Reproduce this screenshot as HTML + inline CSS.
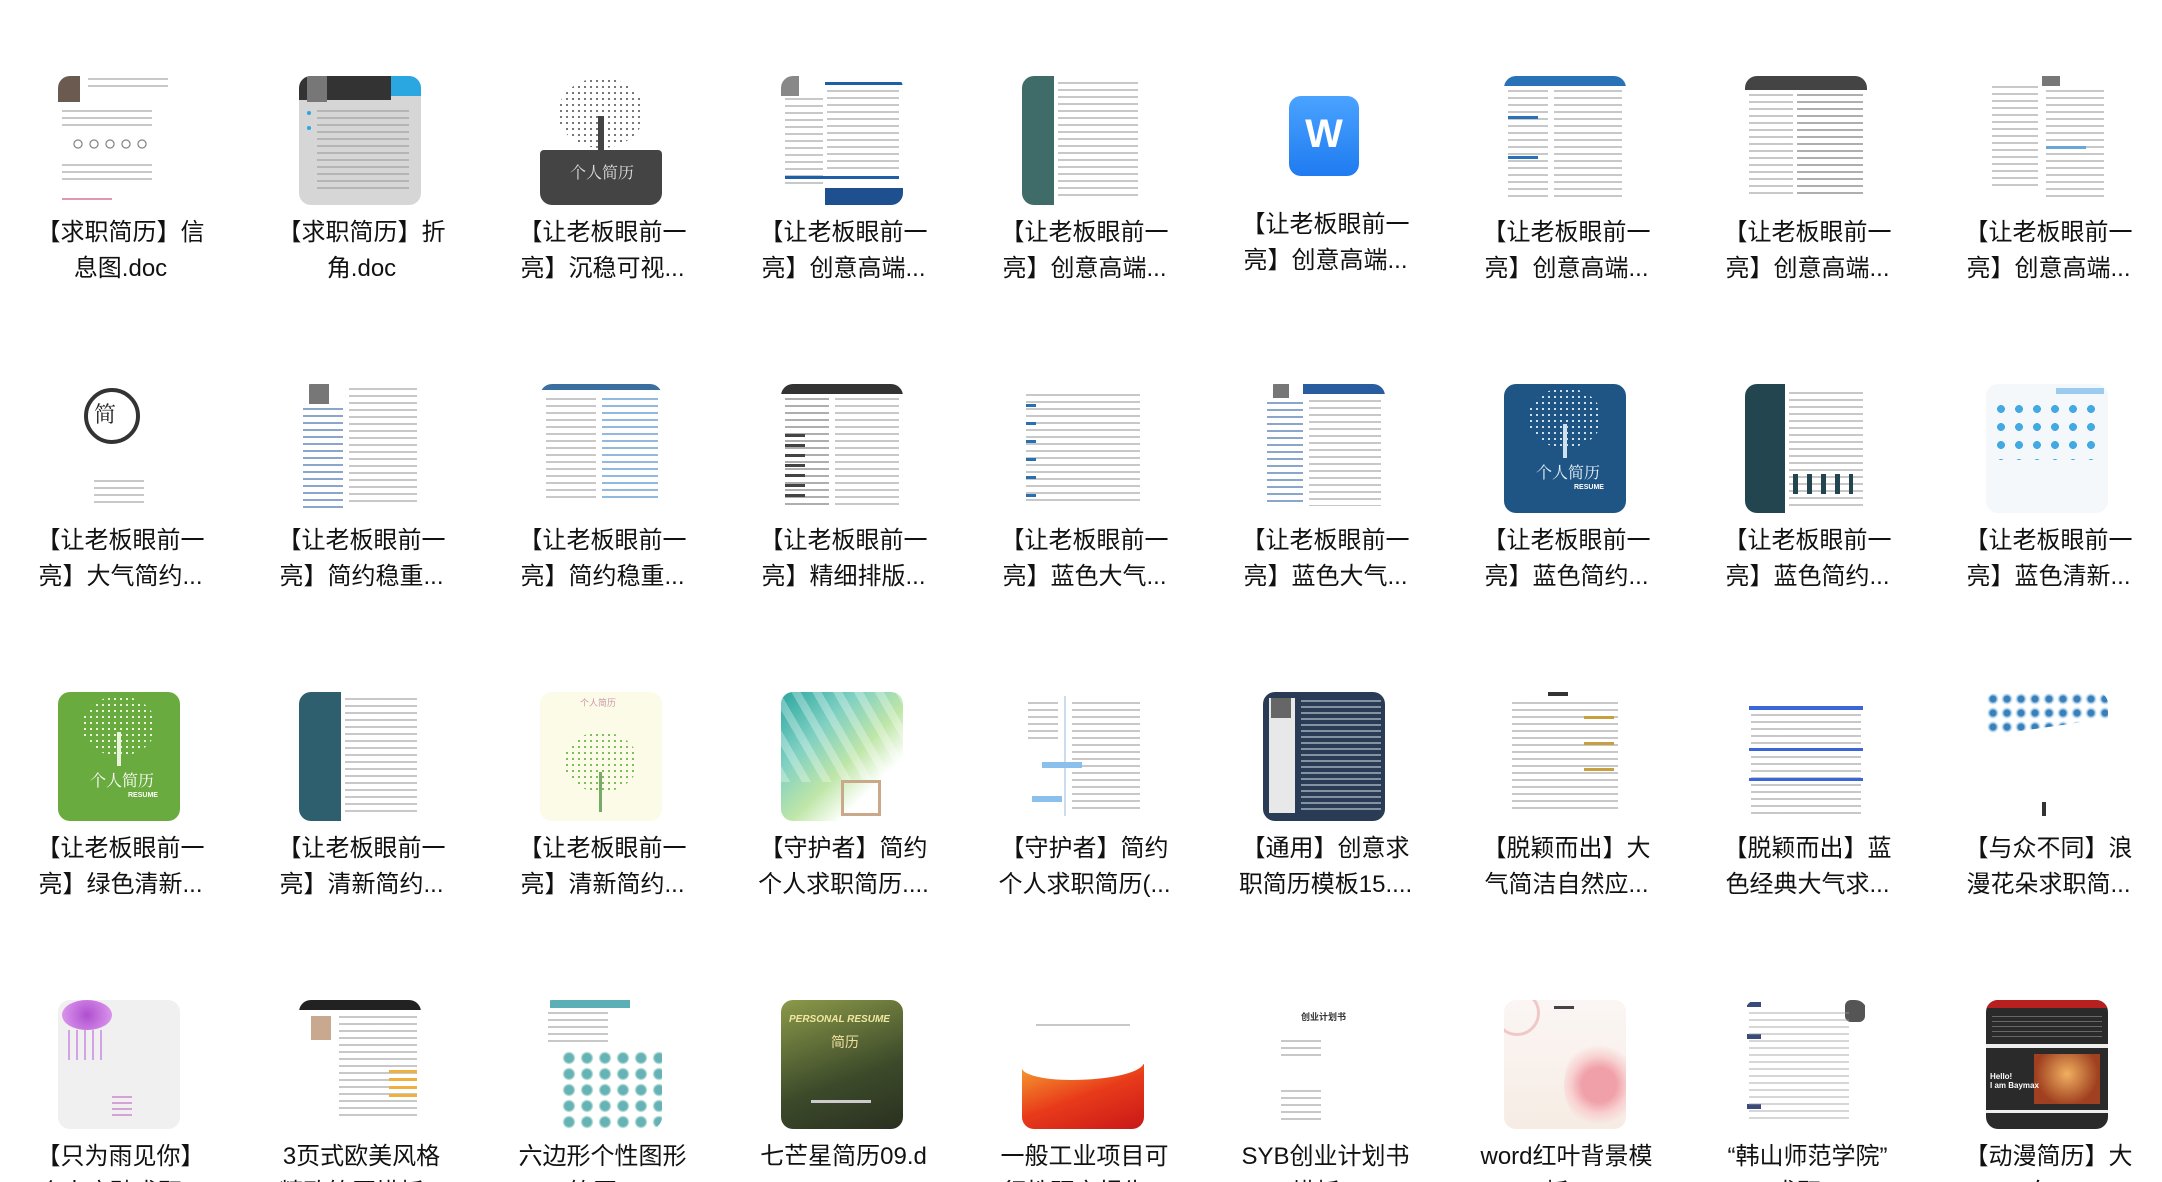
<!DOCTYPE html>
<html><head><meta charset="utf-8">
<style>
html,body{margin:0;padding:0;background:#fff;width:2162px;height:1182px;overflow:hidden;}
body{font-family:"Liberation Sans","Noto Sans CJK SC",sans-serif;position:relative;}
.item{position:absolute;width:241px;}
.th{position:absolute;left:58px;top:0;width:122px;height:129px;border-radius:12px;overflow:hidden;background:#fff;}
.lines{position:absolute;background:repeating-linear-gradient(to bottom,#9a9a9a 0 2px,transparent 2px 7px);opacity:.55}
.lbl{position:absolute;top:139px;left:0;width:241px;text-align:center;font-size:24px;line-height:36px;color:#111;white-space:nowrap;}
</style></head><body>

<!-- Row 1 -->
<div class="item" style="left:0;top:76px"><div class="th" style="background:#fff">
<div style="position:absolute;left:0;top:0;width:22px;height:26px;background:#6b5a50"></div>
<div class="lines" style="left:30px;top:2px;width:80px;height:14px"></div>
<div class="lines" style="left:4px;top:34px;width:90px;height:16px"></div>
<div style="position:absolute;left:12px;top:62px;width:80px;height:12px;background:radial-gradient(circle,#fff 3px,#666 4px,#fff 5px) 0 0/16px 12px repeat-x"></div>
<div class="lines" style="left:4px;top:88px;width:90px;height:20px"></div>
<div style="position:absolute;left:4px;top:122px;width:50px;height:2px;background:#e09ab0"></div>
</div><div class="lbl">【求职简历】信<br>息图.doc</div></div>

<div class="item" style="left:241px;top:76px"><div class="th" style="background:#d6d6d6">
<div style="position:absolute;left:0;top:0;width:92px;height:24px;background:#333"></div>
<div style="position:absolute;left:92px;top:0;width:30px;height:20px;background:#2aa7e0"></div>
<div style="position:absolute;left:8px;top:0;width:20px;height:26px;background:#777"></div>
<div class="lines" style="left:18px;top:34px;width:92px;height:80px"></div>
<div style="position:absolute;left:8px;top:35px;width:4px;height:4px;border-radius:50%;background:#2aa7e0"></div>
<div style="position:absolute;left:8px;top:50px;width:4px;height:4px;border-radius:50%;background:#2aa7e0"></div>
</div><div class="lbl">【求职简历】折<br>角.doc</div></div>

<div class="item" style="left:482px;top:76px"><div class="th" style="background:#fff">
<div style="position:absolute;left:18px;top:2px;width:86px;height:70px;border-radius:50%;background:radial-gradient(circle,#555 0 25%,transparent 26%) 0 0/6px 6px;opacity:.8"></div>
<div style="position:absolute;left:58px;top:40px;width:6px;height:36px;background:#444"></div>
<div style="position:absolute;left:0;top:74px;width:122px;height:55px;background:#444;border-radius:4px"></div>
<div style="position:absolute;left:30px;top:84px;color:#ddd;font-size:16px;font-family:'Noto Serif CJK SC',serif">个人简历</div>
</div><div class="lbl">【让老板眼前一<br>亮】沉稳可视...</div></div>

<div class="item" style="left:723px;top:76px"><div class="th" style="background:#fff">
<div style="position:absolute;left:0;top:0;width:18px;height:20px;background:#888"></div>
<div style="position:absolute;left:44px;top:6px;width:78px;height:3px;background:#1e5fa8"></div>
<div class="lines" style="left:4px;top:22px;width:38px;height:90px"></div>
<div class="lines" style="left:46px;top:14px;width:72px;height:80px"></div>
<div style="position:absolute;left:4px;top:100px;width:114px;height:3px;background:#1e5fa8"></div>
<div style="position:absolute;left:44px;top:112px;width:78px;height:17px;background:#1e4f8f"></div>
</div><div class="lbl">【让老板眼前一<br>亮】创意高端...</div></div>

<div class="item" style="left:964px;top:76px"><div class="th" style="background:#fff">
<div style="position:absolute;left:0;top:0;width:32px;height:129px;background:#3f6b68"></div>
<div class="lines" style="left:36px;top:6px;width:80px;height:115px"></div>
</div><div class="lbl">【让老板眼前一<br>亮】创意高端...</div></div>

<div class="item" style="left:1205px;top:68px"><div class="th" style="background:transparent;overflow:visible">
<div style="position:absolute;left:26px;top:28px;width:70px;height:80px;border-radius:12px;background:linear-gradient(#4aa3ff,#1f7bf0)"></div>
<div style="position:absolute;left:26px;top:44px;width:70px;text-align:center;color:#fff;font-size:40px;font-weight:bold;font-family:'Liberation Sans',sans-serif">W</div>
</div><div class="lbl">【让老板眼前一<br>亮】创意高端...</div></div>

<div class="item" style="left:1446px;top:76px"><div class="th" style="background:#fff">
<div style="position:absolute;left:0;top:0;width:122px;height:10px;background:#2a72b8"></div>
<div class="lines" style="left:4px;top:14px;width:40px;height:110px"></div>
<div class="lines" style="left:50px;top:14px;width:68px;height:110px"></div>
<div style="position:absolute;left:4px;top:40px;width:30px;height:3px;background:#2a72b8"></div>
<div style="position:absolute;left:4px;top:80px;width:30px;height:3px;background:#2a72b8"></div>
</div><div class="lbl">【让老板眼前一<br>亮】创意高端...</div></div>

<div class="item" style="left:1687px;top:76px"><div class="th" style="background:#fff">
<div style="position:absolute;left:0;top:0;width:122px;height:14px;background:#444"></div>
<div class="lines" style="left:4px;top:18px;width:44px;height:105px"></div>
<div class="lines" style="left:52px;top:18px;width:66px;height:105px;opacity:.8"></div>
</div><div class="lbl">【让老板眼前一<br>亮】创意高端...</div></div>

<div class="item" style="left:1928px;top:76px"><div class="th" style="background:#fff">
<div style="position:absolute;left:56px;top:0;width:18px;height:10px;background:#777"></div>
<div class="lines" style="left:6px;top:10px;width:46px;height:100px"></div>
<div class="lines" style="left:60px;top:14px;width:58px;height:108px"></div>
<div style="position:absolute;left:60px;top:70px;width:40px;height:3px;background:#6aa6d8"></div>
</div><div class="lbl">【让老板眼前一<br>亮】创意高端...</div></div>

<!-- Row 2 -->
<div class="item" style="left:0;top:384px"><div class="th" style="background:#fff">
<div style="position:absolute;left:26px;top:4px;width:56px;height:56px;border-radius:50%;border:4px solid #333;box-sizing:border-box"></div>
<div style="position:absolute;left:36px;top:14px;font-size:22px;color:#222;font-family:'Noto Serif CJK SC',serif">简</div>
<div class="lines" style="left:36px;top:96px;width:50px;height:28px"></div>
</div><div class="lbl">【让老板眼前一<br>亮】大气简约...</div></div>

<div class="item" style="left:241px;top:384px"><div class="th" style="background:#fff">
<div style="position:absolute;left:10px;top:0;width:20px;height:20px;background:#777"></div>
<div class="lines" style="left:4px;top:24px;width:40px;height:100px;background:repeating-linear-gradient(#2a5d9f 0 2px,transparent 2px 7px)"></div>
<div class="lines" style="left:50px;top:4px;width:68px;height:118px"></div>
</div><div class="lbl">【让老板眼前一<br>亮】简约稳重...</div></div>

<div class="item" style="left:482px;top:384px"><div class="th" style="background:#fff">
<div style="position:absolute;left:0;top:0;width:122px;height:6px;background:#3a6fa0"></div>
<div class="lines" style="left:6px;top:14px;width:50px;height:100px"></div>
<div class="lines" style="left:62px;top:14px;width:56px;height:100px;background:repeating-linear-gradient(#3a7fc0 0 2px,transparent 2px 7px)"></div>
</div><div class="lbl">【让老板眼前一<br>亮】简约稳重...</div></div>

<div class="item" style="left:723px;top:384px"><div class="th" style="background:#fff">
<div style="position:absolute;left:0;top:0;width:122px;height:10px;background:#333"></div>
<div class="lines" style="left:4px;top:14px;width:44px;height:110px;opacity:.8"></div>
<div class="lines" style="left:54px;top:14px;width:64px;height:110px"></div>
<div style="position:absolute;left:4px;top:50px;width:20px;height:70px;background:repeating-linear-gradient(#444 0 3px,transparent 3px 10px)"></div>
</div><div class="lbl">【让老板眼前一<br>亮】精细排版...</div></div>

<div class="item" style="left:964px;top:384px"><div class="th" style="background:#fff">
<div class="lines" style="left:4px;top:10px;width:114px;height:112px"></div>
<div style="position:absolute;left:4px;top:20px;width:10px;height:100px;background:repeating-linear-gradient(#2a6fb0 0 3px,transparent 3px 18px)"></div>
</div><div class="lbl">【让老板眼前一<br>亮】蓝色大气...</div></div>

<div class="item" style="left:1205px;top:384px"><div class="th" style="background:#fff">
<div style="position:absolute;left:40px;top:0;width:82px;height:10px;background:#2a5d9f"></div>
<div style="position:absolute;left:10px;top:0;width:16px;height:14px;background:#777"></div>
<div class="lines" style="left:4px;top:18px;width:36px;height:104px;background:repeating-linear-gradient(#2a5d9f 0 2px,transparent 2px 7px)"></div>
<div class="lines" style="left:46px;top:16px;width:72px;height:106px"></div>
</div><div class="lbl">【让老板眼前一<br>亮】蓝色大气...</div></div>

<div class="item" style="left:1446px;top:384px"><div class="th" style="background:#1f5585">
<div style="position:absolute;left:24px;top:4px;width:74px;height:60px;border-radius:50%;background:radial-gradient(circle,#cfe0ee 0 25%,transparent 26%) 0 0/6px 6px"></div>
<div style="position:absolute;left:59px;top:40px;width:4px;height:34px;background:#cfe0ee"></div>
<div style="position:absolute;left:32px;top:76px;color:#e8f0f8;font-size:16px;font-family:'Noto Serif CJK SC',serif">个人简历</div>
<div style="position:absolute;left:70px;top:100px;color:#fff;font-size:7px;font-weight:bold">RESUME</div>
</div><div class="lbl">【让老板眼前一<br>亮】蓝色简约...</div></div>

<div class="item" style="left:1687px;top:384px"><div class="th" style="background:#fff">
<div style="position:absolute;left:0;top:0;width:40px;height:129px;background:#22454f"></div>
<div class="lines" style="left:44px;top:8px;width:74px;height:114px"></div>
<div style="position:absolute;left:48px;top:90px;width:60px;height:20px;background:repeating-linear-gradient(90deg,#22454f 0 5px,transparent 5px 14px)"></div>
</div><div class="lbl">【让老板眼前一<br>亮】蓝色简约...</div></div>

<div class="item" style="left:1928px;top:384px"><div class="th" style="background:#f4f8fb">
<div style="position:absolute;left:6px;top:16px;width:112px;height:60px;background:radial-gradient(circle,#2fa0e0 0 30%,transparent 32%) 0 0/18px 18px;opacity:.9"></div>
<div style="position:absolute;left:70px;top:4px;width:48px;height:6px;background:#9bcbee"></div>
</div><div class="lbl">【让老板眼前一<br>亮】蓝色清新...</div></div>

<!-- Row 3 -->
<div class="item" style="left:0;top:692px"><div class="th" style="background:#6aab3f">
<div style="position:absolute;left:24px;top:4px;width:74px;height:60px;border-radius:50%;background:radial-gradient(circle,#e8f4dc 0 25%,transparent 26%) 0 0/6px 6px"></div>
<div style="position:absolute;left:59px;top:40px;width:4px;height:34px;background:#e8f4dc"></div>
<div style="position:absolute;left:32px;top:76px;color:#fff;font-size:16px;font-family:'Noto Serif CJK SC',serif">个人简历</div>
<div style="position:absolute;left:70px;top:100px;color:#fff;font-size:7px;font-weight:bold">RESUME</div>
</div><div class="lbl">【让老板眼前一<br>亮】绿色清新...</div></div>

<div class="item" style="left:241px;top:692px"><div class="th" style="background:#fff">
<div style="position:absolute;left:0;top:0;width:42px;height:129px;background:#2d5f6e"></div>
<div class="lines" style="left:46px;top:6px;width:72px;height:116px"></div>
</div><div class="lbl">【让老板眼前一<br>亮】清新简约...</div></div>

<div class="item" style="left:482px;top:692px"><div class="th" style="background:#fbfbe8">
<div style="position:absolute;left:40px;top:4px;width:60px;height:10px;color:#c9a;font-size:9px">个人简历</div>
<div style="position:absolute;left:24px;top:40px;width:74px;height:60px;border-radius:50%;background:radial-gradient(circle,#7bbf5a 0 25%,transparent 26%) 0 0/6px 6px"></div>
<div style="position:absolute;left:59px;top:80px;width:3px;height:40px;background:#7a6"></div>
</div><div class="lbl">【让老板眼前一<br>亮】清新简约...</div></div>

<div class="item" style="left:723px;top:692px"><div class="th" style="background:linear-gradient(135deg,#2aa6a0 0,#7fd0c2 30%,#bfe6a8 55%,#fff 75%)">
<div style="position:absolute;left:0;top:0;width:122px;height:90px;background:repeating-linear-gradient(60deg,rgba(255,255,255,.3) 0 8px,transparent 8px 18px)"></div>
<div style="position:absolute;left:60px;top:88px;width:40px;height:36px;border:3px solid #c9a98a;box-sizing:border-box"></div>
</div><div class="lbl">【守护者】简约<br>个人求职简历....</div></div>

<div class="item" style="left:964px;top:692px"><div class="th" style="background:#fff">
<div class="lines" style="left:6px;top:10px;width:30px;height:40px"></div>
<div style="position:absolute;left:42px;top:4px;width:2px;height:120px;background:#cde"></div>
<div class="lines" style="left:50px;top:10px;width:68px;height:110px"></div>
<div style="position:absolute;left:20px;top:70px;width:40px;height:6px;background:#8cc0ec"></div>
<div style="position:absolute;left:10px;top:104px;width:30px;height:6px;background:#8cc0ec"></div>
</div><div class="lbl">【守护者】简约<br>个人求职简历(...</div></div>

<div class="item" style="left:1205px;top:692px"><div class="th" style="background:#2a3c55">
<div style="position:absolute;left:6px;top:6px;width:26px;height:115px;background:#e8e8e8"></div>
<div style="position:absolute;left:8px;top:6px;width:20px;height:20px;background:#666"></div>
<div class="lines" style="left:38px;top:8px;width:80px;height:112px;background:repeating-linear-gradient(#d0d8e0 0 2px,transparent 2px 6px)"></div>
</div><div class="lbl">【通用】创意求<br>职简历模板15....</div></div>

<div class="item" style="left:1446px;top:692px"><div class="th" style="background:#fff">
<div style="position:absolute;left:44px;top:0;width:20px;height:4px;background:#333"></div>
<div class="lines" style="left:8px;top:10px;width:106px;height:112px"></div>
<div style="position:absolute;left:80px;top:24px;width:30px;height:3px;background:#c8a040"></div>
<div style="position:absolute;left:80px;top:50px;width:30px;height:3px;background:#c8a040"></div>
<div style="position:absolute;left:80px;top:76px;width:30px;height:3px;background:#c8a040"></div>
</div><div class="lbl">【脱颖而出】大<br>气简洁自然应...</div></div>

<div class="item" style="left:1687px;top:692px"><div class="th" style="background:#fff">
<div style="position:absolute;left:4px;top:14px;width:114px;height:4px;background:#3b66d8"></div>
<div class="lines" style="left:6px;top:22px;width:110px;height:100px"></div>
<div style="position:absolute;left:4px;top:56px;width:114px;height:3px;background:#3b66d8"></div>
<div style="position:absolute;left:4px;top:86px;width:114px;height:3px;background:#3b66d8"></div>
</div><div class="lbl">【脱颖而出】蓝<br>色经典大气求...</div></div>

<div class="item" style="left:1928px;top:692px"><div class="th" style="background:#fff">
<div style="position:absolute;left:0;top:0;width:122px;height:44px;background:radial-gradient(circle,#3a7fb8 0 30%,#9cc8e8 40%,transparent 60%) 0 0/14px 14px;clip-path:polygon(0 0,100% 0,100% 60%,0 100%)"></div>
<div style="position:absolute;left:56px;top:110px;width:4px;height:14px;background:#333"></div>
</div><div class="lbl">【与众不同】浪<br>漫花朵求职简...</div></div>

<!-- Row 4 -->
<div class="item" style="left:0;top:1000px"><div class="th" style="background:#f0f0f0">
<div style="position:absolute;left:4px;top:0;width:50px;height:30px;border-radius:50%;background:radial-gradient(circle,#b04fd0,#e0a0f0)"></div>
<div style="position:absolute;left:10px;top:30px;width:40px;height:30px;background:repeating-linear-gradient(90deg,#c070e0 0 2px,transparent 2px 8px);opacity:.6"></div>
<div class="lines" style="left:54px;top:96px;width:20px;height:20px;background:repeating-linear-gradient(#c060c0 0 2px,transparent 2px 6px)"></div>
</div><div class="lbl">【只为雨见你】<br>个人应聘求职...</div></div>

<div class="item" style="left:241px;top:1000px"><div class="th" style="background:#fff">
<div style="position:absolute;left:0;top:0;width:122px;height:10px;background:#222"></div>
<div style="position:absolute;left:12px;top:16px;width:20px;height:24px;background:#c9a890"></div>
<div class="lines" style="left:40px;top:16px;width:78px;height:104px"></div>
<div style="position:absolute;left:90px;top:70px;width:28px;height:30px;background:repeating-linear-gradient(#f0b040 0 3px,transparent 3px 8px)"></div>
</div><div class="lbl">3页式欧美风格<br>精致简历模板...</div></div>

<div class="item" style="left:482px;top:1000px"><div class="th" style="background:#fff">
<div style="position:absolute;left:10px;top:0;width:80px;height:8px;background:#5bb0b8"></div>
<div class="lines" style="left:8px;top:12px;width:60px;height:30px"></div>
<div style="position:absolute;left:20px;top:50px;width:102px;height:79px;background:radial-gradient(circle,#4aa6a8 0 35%,#9fd0c8 45%,transparent 55%) 0 0/18px 16px;opacity:.85"></div>
</div><div class="lbl">六边形个性图形<br>简历...</div></div>

<div class="item" style="left:723px;top:1000px"><div class="th" style="background:linear-gradient(160deg,#8c9a4a,#3c4a2a 60%,#2a3020)">
<div style="position:absolute;left:8px;top:14px;color:#f0e8a0;font-size:10px;font-style:italic;font-weight:bold">PERSONAL RESUME</div>
<div style="position:absolute;left:50px;top:32px;color:#f0e0a0;font-size:14px">简历</div>
<div style="position:absolute;left:30px;top:100px;width:60px;height:3px;background:#ccc"></div>
</div><div class="lbl">七芒星简历09.d<br>oc</div></div>

<div class="item" style="left:964px;top:1000px"><div class="th" style="background:#fff">
<div class="lines" style="left:14px;top:24px;width:94px;height:6px"></div>
<div style="position:absolute;left:0;top:64px;width:122px;height:65px;background:linear-gradient(160deg,#f5a030,#e83a1a 50%,#c81818)"></div>
<div style="position:absolute;left:0;top:50px;width:122px;height:30px;background:#fff;border-radius:0 0 60% 40%"></div>
</div><div class="lbl">一般工业项目可<br>行性研究报告...</div></div>

<div class="item" style="left:1205px;top:1000px"><div class="th" style="background:#fff">
<div style="position:absolute;left:38px;top:10px;font-size:9px;color:#333;font-weight:bold">创业计划书</div>
<div class="lines" style="left:18px;top:40px;width:40px;height:20px"></div>
<div class="lines" style="left:18px;top:90px;width:40px;height:34px"></div>
</div><div class="lbl">SYB创业计划书<br>模板...</div></div>

<div class="item" style="left:1446px;top:1000px"><div class="th" style="background:linear-gradient(#fbf6f4,#f6ece4)">
<div style="position:absolute;left:-10px;top:-10px;width:40px;height:40px;border-radius:50%;border:3px solid #f0c8c8"></div>
<div style="position:absolute;left:60px;top:40px;width:70px;height:90px;border-radius:50%;background:radial-gradient(circle,#f0a0a8 0 30%,#f8d0d0 50%,transparent 70%)"></div>
<div style="position:absolute;left:50px;top:6px;width:20px;height:3px;background:#444"></div>
</div><div class="lbl">word红叶背景模<br>板...</div></div>

<div class="item" style="left:1687px;top:1000px"><div class="th" style="background:#fff">
<div style="position:absolute;left:100px;top:0;width:20px;height:22px;background:#555;border-radius:6px"></div>
<div style="position:absolute;left:2px;top:2px;width:14px;height:5px;background:#3a4a7a"></div>
<div style="position:absolute;left:2px;top:34px;width:14px;height:5px;background:#3a4a7a"></div>
<div style="position:absolute;left:2px;top:104px;width:14px;height:5px;background:#3a4a7a"></div>
<div class="lines" style="left:4px;top:12px;width:100px;height:110px;opacity:.4"></div>
</div><div class="lbl">“韩山师范学院”<br>求职...</div></div>

<div class="item" style="left:1928px;top:1000px"><div class="th" style="background:#2a2a2a">
<div style="position:absolute;left:0;top:0;width:122px;height:8px;background:#b82020"></div>
<div class="lines" style="left:6px;top:16px;width:110px;height:24px;background:repeating-linear-gradient(#999 0 1px,transparent 1px 5px)"></div>
<div style="position:absolute;left:0;top:44px;width:122px;height:4px;background:#eee"></div>
<div style="position:absolute;left:48px;top:54px;width:66px;height:50px;background:radial-gradient(circle at 50% 40%,#f0b060,#a04020 70%)"></div>
<div style="position:absolute;left:4px;top:72px;color:#fff;font-size:8px;font-weight:bold">Hello!<br>I am Baymax</div>
<div style="position:absolute;left:0;top:110px;width:122px;height:3px;background:#eee"></div>
</div><div class="lbl">【动漫简历】大<br>白...</div></div>

</body></html>
